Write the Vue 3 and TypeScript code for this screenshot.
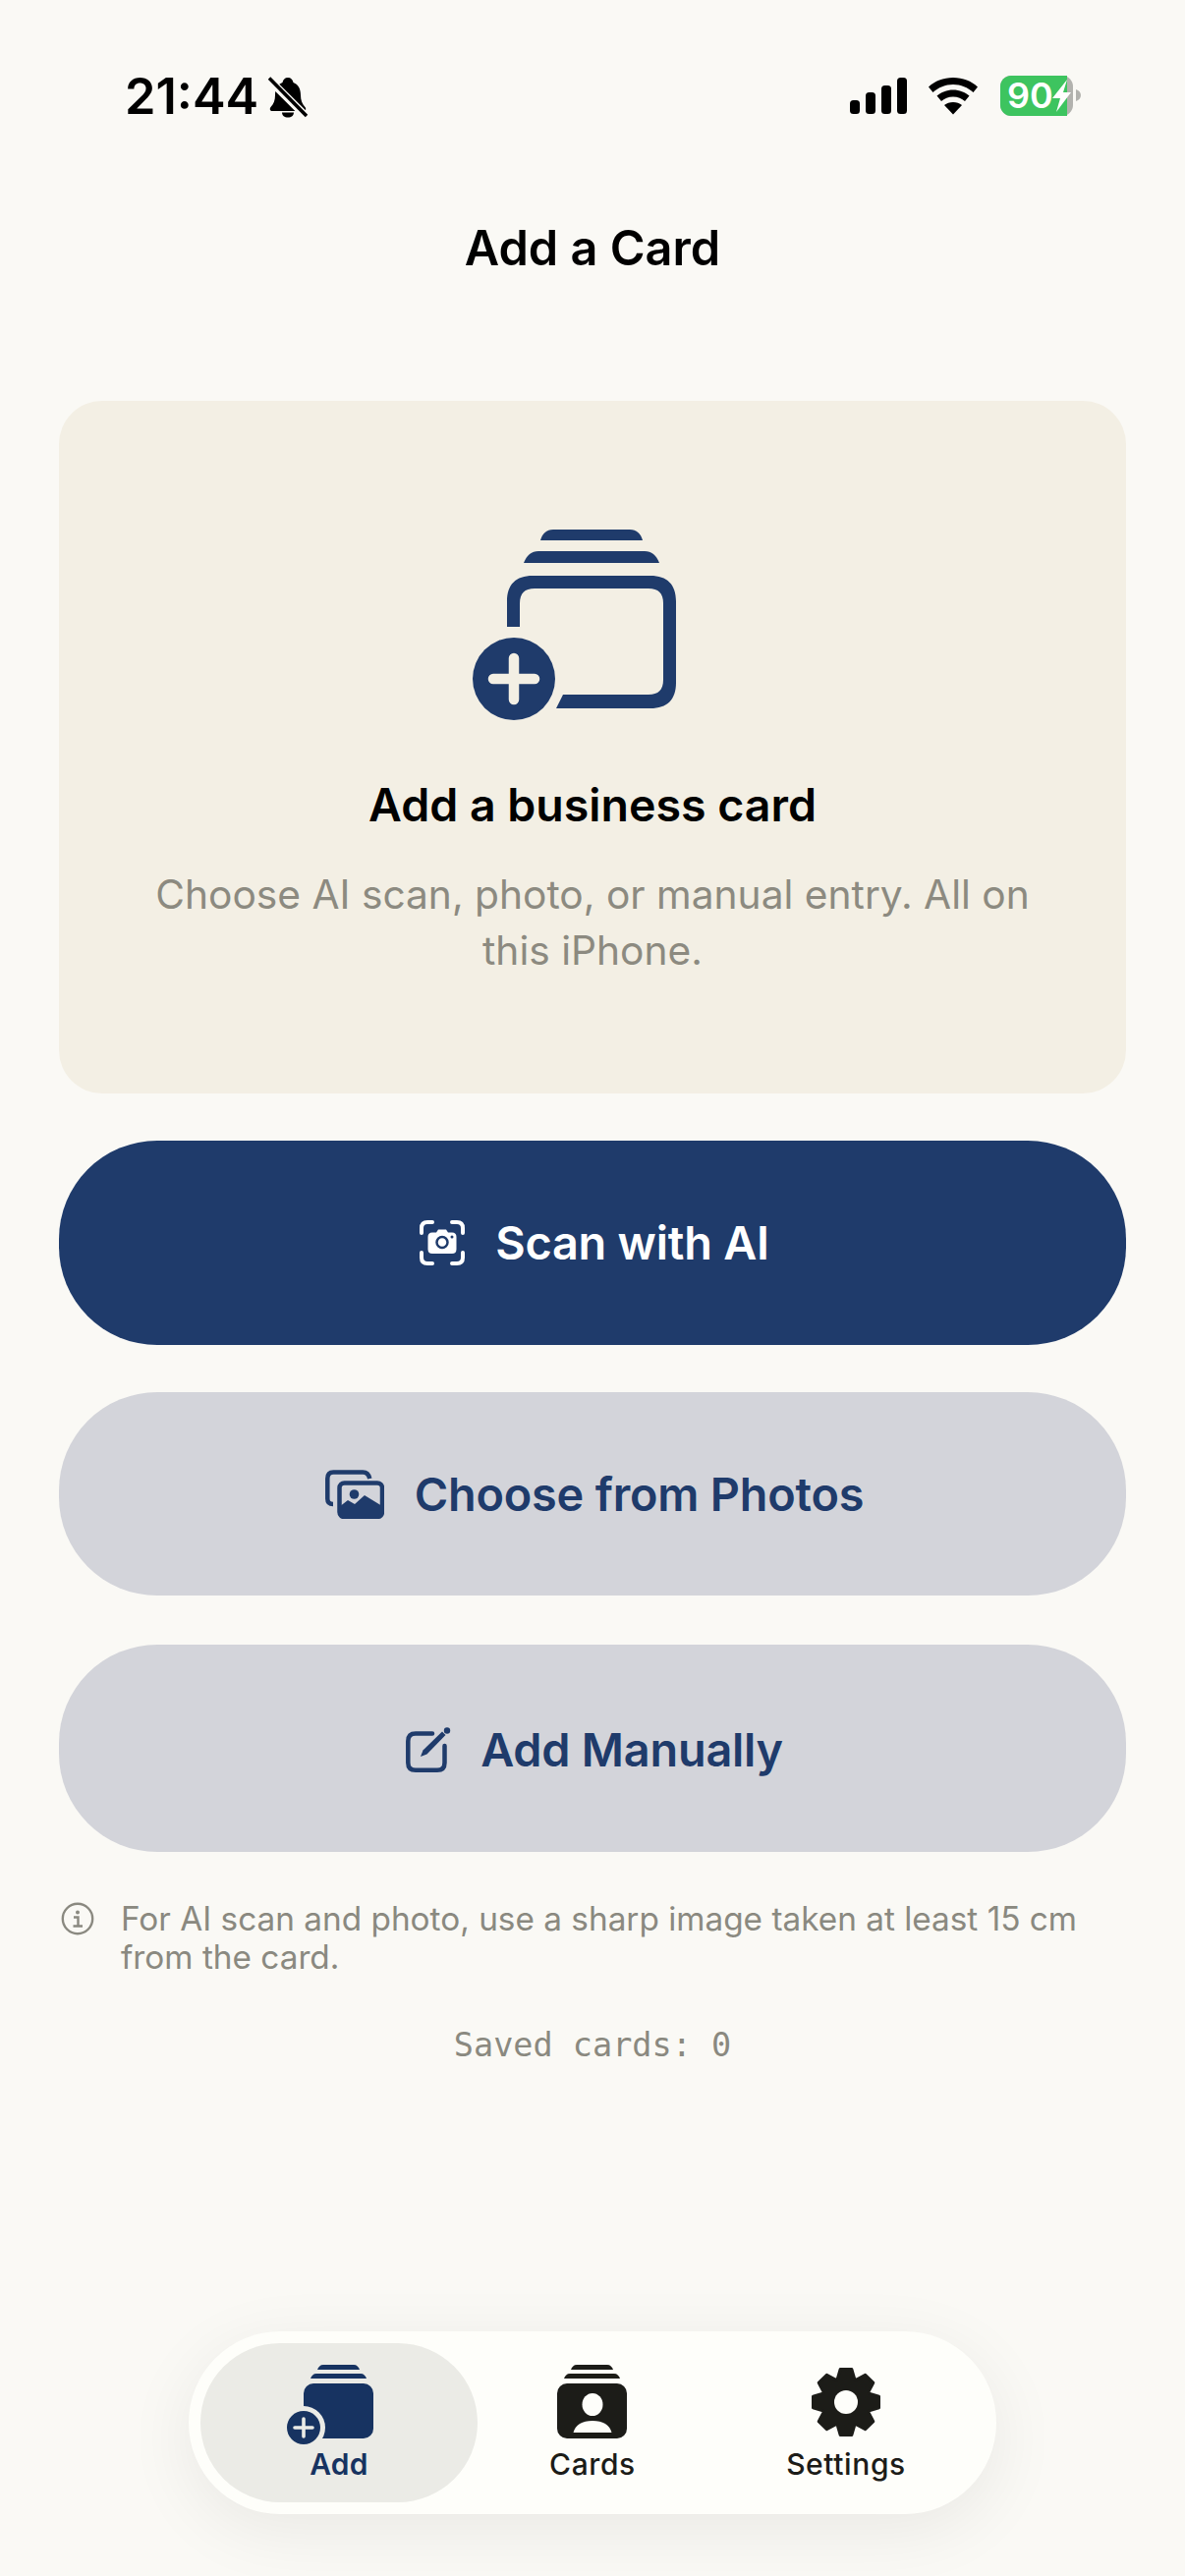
<template>
    <div class="screen">
        <div class="status">
            <div class="status-left">
                <span class="time">21:44</span>
                <svg class="bell" viewBox="0 0 40 42" width="40" height="42">
                    <path
                        fill="#000"
                        d="M20 1c-3 0-5 2-5.500 5C9 8 7 13 7 19c0 5-1.500 9-4.500 12-1.500 2-.5 4 1.500 4h32c2 0 3-2 1.500-4C34.500 28 33 24 33 19c0-6-2-11-7.500-13C25 3 23 1 20 1z" />
                    <path fill="#000" d="M14 36.500h12c0 3-2.500 5-6 5s-6-2-6-5z" />
                    <path stroke="#faf9f5" stroke-width="8" d="M1 3l38 38" />
                    <path stroke="#000" stroke-width="3.600" d="M1 1.500l38 38.500" />
                </svg>
            </div>
            <svg class="status-right" viewBox="865 70 235 56" width="235" height="56">
                <rect x="865" y="102" width="10" height="14" rx="3.500" />
                <rect x="881" y="94" width="10" height="22" rx="3.500" />
                <rect x="897" y="87" width="10" height="29" rx="3.500" />
                <rect x="913" y="79" width="10" height="37" rx="3.500" />
                <path
                    d="M970 79c-10 0-18.500 3.500-25 9.500l4.500 5.500c5.500-5 12.500-8 20.500-8s15 3 20.500 8l4.500-5.500C988.500 82.500 980 79 970 79z" />
                <path
                    d="M970 91.500c-6.500 0-12 2.500-16.500 6l4.500 5.500c3-2.500 7.300-4.500 12-4.500s9 2 12 4.500l4.500-5.500c-4.500-3.500-10-6-16.500-6z" />
                <path d="M970 104c-3.500 0-6.500 1-9 3l9 9.500 9-9.500c-2.500-2-5.500-3-9-3z" />
                <rect x="1018" y="77" width="74" height="41" rx="11" fill="#b2b2ae" />
                <path
                    fill="#3dc45f"
                    d="M1029 77h57v41h-57c-6 0-11-5-11-11V88c0-6 5-11 11-11z" />
                <path fill="#b2b2ae" d="M1095 91c3 1 5 3 5 6s-2 5-5 6z" />
                <text class="battery-text" x="1025" y="110">90</text>
                <path fill="#fff" d="M1086 81l-15 19h8l-4 14 15-20h-8z" />
            </svg>
        </div>

        <header class="header">
            <h1>Add a Card</h1>
        </header>

        <main class="content">
            <section class="intro">
                <svg class="intro-icon" viewBox="25 25 256 200" width="256" height="200">
                    <path d="M100 40c2-7 6-11 13-11h78c7 0 11 4 13 11z" />
                    <path d="M83 63c3-8 8-12 15-12h108c7 0 12 4 15 12z" />
                    <path
                        d="M66 128v-26c0-17 9-26 26-26h120c17 0 26 9 26 26v83c0 17-9 26-26 26h-96l7-14h87c10 0 15-5 15-15v-78c0-10-5-15-15-15H94c-10 0-15 5-15 15v24z" />
                    <circle cx="73" cy="181" r="42" />
                    <path
                        d="M52 181h42M73 160v42"
                        fill="none"
                        stroke="#f3efe4"
                        stroke-width="10.500"
                        stroke-linecap="round" />
                </svg>
                <h2>Add a business card</h2>
                <p>Choose AI scan, photo, or manual entry. All on this iPhone.</p>
            </section>

            <button class="action primary scan">
                <svg viewBox="0 0 46 46" width="46" height="46">
                    <path
                        fill="none"
                        stroke="#fff"
                        stroke-width="4"
                        stroke-linecap="round"
                        d="M2 13V8c0-4 2-6 6-6h5M33 2h5c4 0 6 2 6 6v5M44 33v5c0 4-2 6-6 6h-5M13 44H8c-4 0-6-2-6-6v-5" />
                    <path
                        fill="#fff"
                        d="M13 12.500h4l2-3h8l2 3h4c3 0 4.500 1.500 4.500 4.500v12.500c0 3-1.500 4.500-4.500 4.500H13c-3 0-4.500-1.500-4.500-4.500V17c0-3 1.500-4.500 4.500-4.500z" />
                    <circle cx="23" cy="22.500" r="5.500" fill="#fff" stroke="#1f3b6b" stroke-width="2.500" />
                    <circle cx="33" cy="17" r="1.500" fill="#1f3b6b" />
                </svg>
                <span>Scan with AI</span>
            </button>

            <button class="action secondary photos">
                <svg viewBox="0 0 60 50" width="60" height="50">
                    <path
                        fill="none"
                        stroke="#1f3b6b"
                        stroke-width="4.500"
                        d="M8 35c-4 0-5.700-2-5.700-5.500V9c0-4 2-6.500 6-6.500h30c4 0 6 2 7 6.500" />
                    <rect x="14.500" y="13.500" width="43.500" height="34.500" rx="5" fill="none" stroke="#1f3b6b" stroke-width="4.500" />
                    <path
                        fill="#1f3b6b"
                        d="M14 38l9-7 7 4 10-9 18 11v6c0 5-2 7-6 7H20c-4 0-6-2-6-7z" />
                    <circle cx="29.500" cy="25" r="4.800" fill="#1f3b6b" />
                </svg>
                <span>Choose from Photos</span>
            </button>

            <button class="action secondary manual">
                <svg viewBox="0 0 46 47" width="46" height="47">
                    <path
                        fill="none"
                        stroke="#1f3b6b"
                        stroke-width="4.500"
                        stroke-linecap="round"
                        d="M27 7.500H10c-5 0-7.700 2.700-7.700 7.700v22c0 5 2.700 7.500 7.700 7.500h22c5 0 7.500-2.500 7.500-7.500V20" />
                    <path fill="#1f3b6b" d="M15 31l2.500-6.500L37 5.500l3.500 3.500L21.500 28.500z" />
                    <circle cx="42" cy="4.500" r="3.200" fill="#1f3b6b" />
                </svg>
                <span>Add Manually</span>
            </button>

            <div class="note">
                <svg viewBox="0 0 34 34" width="34" height="34">
                    <circle cx="17" cy="17" r="15.200" fill="none" stroke="#8a8980" stroke-width="2.400" />
                    <circle cx="17" cy="10.500" r="2" fill="#8a8980" />
                    <path
                        fill="none"
                        stroke="#8a8980"
                        stroke-width="2.400"
                        d="M13 15.500h4.500V24M12.500 24.500h9.500" />
                </svg>
                <p>For AI scan and photo, use a sharp image taken at least 15 cm from the card.</p>
            </div>

            <div class="saved">Saved cards: {{ savedCount }}</div>
        </main>

        <nav class="tabs">
            <div
                v-for="tab in tabs"
                :key="tab.label"
                class="tab"
                :class="{ active: tab.label === activeTab }">
                <svg viewBox="105 40 120 90" width="120" height="90">
                    <template v-if="tab.label !== 'Settings'">
                        <path d="M143 52c1-3 3-5 6-5h31c3 0 5 2 6 5z" />
                        <path d="M136 61c1-3 3-5 6-5h45c3 0 5 2 6 5z" />
                        <rect x="129" y="66" width="71" height="56" rx="10" />
                    </template>
                    <template v-if="tab.label === 'Add'">
                        <circle cx="129" cy="111" r="22" fill="#ebebe6" />
                        <circle cx="129" cy="111" r="17" />
                        <path
                            d="M120 111h18M129 102v18"
                            fill="none"
                            stroke="#ebebe6"
                            stroke-width="3.600"
                            stroke-linecap="round" />
                    </template>
                    <template v-else-if="tab.label === 'Cards'">
                        <ellipse cx="165" cy="87.500" rx="10.500" ry="11.500" fill="#fefefa" />
                        <path d="M145.500 116c2-8 9-12 19.500-12s17.500 4 19.500 12z" fill="#fefefa" />
                    </template>
                    <template v-else>
                        <path :d="gearPath" stroke-width="3" stroke-linejoin="round" class="gear" />
                        <circle cx="165" cy="85" r="12" fill="#fefefa" />
                    </template>
                </svg>
                <span>{{ tab.label }}</span>
            </div>
        </nav>
    </div>
</template>

<script setup lang="ts">
import { ref } from 'vue';

interface Tab {
    label: string;
}

const tabs: Tab[] = [{ label: 'Add' }, { label: 'Cards' }, { label: 'Settings' }];
const activeTab = ref<string>('Add');
const savedCount = ref<number>(0);

// 8 tooth gear around the middle of the tab icon box
function buildGear(cx: number, cy: number): string {
    const points: string[] = [];
    for (let i = 0; i < 8; i++) {
        const a = (i * Math.PI) / 4 - Math.PI / 2;
        const corners: Array<[number, number]> = [
            [25, -0.36],
            [34, -0.17],
            [34, 0.17],
            [25, 0.36]
        ];
        corners.forEach(([r, d]) => {
            const x = cx + r * Math.cos(a + d);
            const y = cy + r * Math.sin(a + d);
            points.push(`${x.toFixed(1)} ${y.toFixed(1)}`);
        });
    }
    return `M${points.join('L')}Z`;
}

const gearPath = buildGear(165, 85);
</script>

<style>
html,
body {
    margin: 0;
    background: #faf9f5;
}
</style>

<style scoped>
.screen {
    position: relative;
    width: 1206px;
    height: 2622px;
    overflow: hidden;
    background: #faf9f5;
    font-family: Inter, 'Noto Sans', sans-serif;
    color: #000;
}

.status {
    display: flex;
    justify-content: space-between;
    align-items: center;
    height: 56px;
    padding: 70px 106px 0 127px;
}

.status-left {
    display: flex;
    align-items: center;
    gap: 10px;
}

.time {
    font-size: 50.500px;
    line-height: 56px;
    font-weight: 600;
}

.bell {
    margin-top: 2px;
}

.battery-text {
    font-family: Inter, sans-serif;
    font-size: 36px;
    font-weight: 600;
    fill: #fff;
}

.header {
    padding-top: 95px;
    margin-bottom: 123px;
}

h1 {
    margin: 0;
    text-align: center;
    font-size: 48.700px;
    line-height: 64px;
    font-weight: 600;
}

.content {
    display: flex;
    flex-direction: column;
    padding: 0 60px;
}

.intro {
    display: flex;
    flex-direction: column;
    align-items: center;
    box-sizing: border-box;
    height: 705px;
    padding-top: 127px;
    border-radius: 44px;
    background: #f3efe4;
}

.intro-icon {
    fill: #1f3b6b;
}

.intro h2 {
    margin: 52px 0 0;
    font-size: 46.500px;
    line-height: 64px;
    font-weight: 600;
}

.intro p {
    margin: 31px 0 0;
    width: 920px;
    text-align: center;
    font-size: 40.700px;
    line-height: 57px;
    color: #8c8a80;
}

.action {
    display: flex;
    align-items: center;
    justify-content: center;
    gap: 31px;
    width: 100%;
    padding: 0 0 0 4px;
    border: none;
    border-radius: 100px;
    font-family: inherit;
    font-size: 46.800px;
    font-weight: 600;
    letter-spacing: -0.2px;
}

.primary {
    background: #1f3b6b;
    color: #fff;
}

.secondary {
    background: #d3d4da;
    color: #1f3b6b;
}

.scan {
    height: 208px;
    margin-top: 48px;
}

.photos {
    height: 207px;
    margin-top: 48px;
}

.manual {
    height: 211px;
    margin-top: 50px;
    padding-top: 2px;
    gap: 30px;
}

.note {
    display: flex;
    gap: 27px;
    margin-top: 49px;
    padding-left: 2px;
    color: #8a8980;
}

.note svg {
    flex: none;
    margin-top: 2px;
}

.note p {
    margin: 0;
    width: 1000px;
    font-size: 33.350px;
    line-height: 39px;
}

.saved {
    margin-top: 50px;
    text-align: center;
    font-family: 'DejaVu Sans Mono', 'Liberation Mono', monospace;
    font-size: 33.500px;
    line-height: 40px;
    color: #8a8980;
    font-variant-numeric: slashed-zero;
}

.tabs {
    position: absolute;
    left: 192px;
    top: 2373px;
    box-sizing: border-box;
    display: grid;
    grid-template-columns: 282px 234px 282px;
    width: 822px;
    height: 186px;
    padding: 12px;
    border-radius: 93px;
    background: #fefefa;
    box-shadow: 0 16px 70px rgba(0, 0, 0, 0.07);
}

.tab {
    display: flex;
    flex-direction: column;
    align-items: center;
    padding-top: 15px;
    border-radius: 81px;
    fill: #1c1c18;
    color: #1c1c18;
    font-size: 30px;
    line-height: 36px;
    font-weight: 450;
    letter-spacing: 0.6px;
}

.tab svg {
    display: block;
}

.gear {
    stroke: #1c1c18;
}

.tab.active {
    background: #ebebe6;
    fill: #173361;
    color: #173361;
    font-weight: 600;
    letter-spacing: 0.2px;
}
</style>
